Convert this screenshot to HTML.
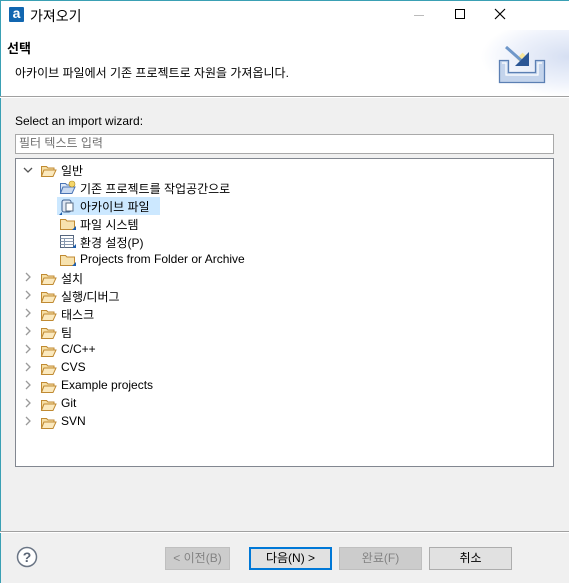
<!DOCTYPE html>
<html><head><meta charset="utf-8"><style>
*{margin:0;padding:0;box-sizing:border-box}
body{width:569px;height:583px;overflow:hidden;background:#f0f0f0;font-family:"Liberation Sans","Noto Sans CJK KR",sans-serif;font-size:12px;color:#000;position:relative}
.a{position:absolute;white-space:nowrap}
.btn{position:absolute;top:547px;height:23px;border:1px solid #adadad;background:#e1e1e1;text-align:center;line-height:21px;font-size:12px}
.dis{background:#cccccc;border-color:#bfbfbf;color:#838383}
</style></head><body>
<div class="a" style="left:0;top:0;width:569px;height:97px;background:#fff"></div>
<div class="a" style="left:0;top:0;width:569px;height:1px;background:#3aa0b4"></div>
<div class="a" style="left:0;top:0;width:1px;height:583px;background:#3aa0b4"></div>
<!-- title -->
<div class="a" style="left:9px;top:7px;width:15px;height:15px;background:#1166b0;border-radius:1px;color:#fff;font-weight:bold;font-size:14px;line-height:13px;text-align:center">a</div>
<div class="a" style="left:30px;top:6px;font-size:14px">가져오기</div>
<div class="a" style="left:414px;top:15px;width:10px;height:1px;background:#bbb"></div>
<div class="a" style="left:455px;top:9px;width:10px;height:10px;border:1px solid #000"></div>
<svg class="a" style="left:494px;top:8px" width="12" height="12"><path d="M1 1L11 11M11 1L1 11" stroke="#000" stroke-width="1.2"/></svg>
<!-- header -->
<div class="a" style="left:480px;top:30px;width:89px;height:67px;background:radial-gradient(ellipse at 100% 40%,#d6dff2 0%,#eef2fb 45%,#fff 70%)"></div>
<div class="a" style="left:7px;top:38px;font-weight:bold;font-size:13px">선택</div>
<div class="a" style="left:15px;top:64px">아카이브 파일에서 기존 프로젝트로 자원을 가져옵니다.</div>
<svg class="a" style="left:498px;top:46px" width="52" height="40">
<path d="M1.5 14.5h9v12h27v-12h9v22h-45z" fill="#c4d4ec" stroke="#5b7fb3" stroke-width="1.3"/>
<path d="M4 17h4v12h32v-12h4" stroke="#fff" fill="none" stroke-width="1.2"/>
<path d="M20 14l6-6" stroke="#f8e69a" stroke-width="4"/>
<path d="M8 1l17 15" stroke="#6f97c9" stroke-width="3"/>
<path d="M17 20l14 0 0-14z" fill="#2b5695"/>
</svg>
<div class="a" style="left:0;top:96px;width:569px;height:1px;background:#a0a0a0"></div>
<div class="a" style="left:0;top:97px;width:569px;height:1px;background:#fff"></div>
<!-- body -->
<div class="a" style="left:15px;top:114px">Select an import wizard:</div>
<div class="a" style="left:15px;top:134px;width:539px;height:20px;background:#fff;border:1px solid #a9a9a9;color:#6d6d6d;padding-left:3px;line-height:17px">필터 텍스트 입력</div>
<div class="a" style="left:15px;top:158px;width:539px;height:309px;background:#fff;border:1px solid #828790"></div>
<div class="a" style="left:57px;top:197px;width:103px;height:18px;background:#cce8ff"></div>
<svg class="a" style="left:0;top:0" width="569" height="470">
<defs>
<g id="of"><path d="M0.5 2.5h5l1.5 1.5h6v2H3L0.5 12z" fill="#f6dfa5" stroke="#c08a32"/><path d="M3 6h12l-3 6.5H0.5z" fill="#fbe9be" stroke="#c08a32"/></g>
<g id="cf"><path d="M0.5 2.5h5l1.5 1.5h7.5v8.5H0.5z" fill="#f7e2ae" stroke="#c08a32"/><path d="M12 13l4-4v4z" fill="#1e5fae"/></g>
</defs>
<path d="M24 168l4 4 4-4" stroke="#555" fill="none" stroke-width="1.3"/>
<use href="#of" x="41" y="164"/>
<g transform="translate(60,181)"><path d="M0.5 2.5h5l1.5 1.5h6v2H3L0.5 12z" fill="#dce8f8" stroke="#4b75b5"/><path d="M3 6h12l-3 6.5H0.5z" fill="#c9daf2" stroke="#4b75b5"/><circle cx="12" cy="3" r="3" fill="#f5d66a" stroke="#b08a20" stroke-width=".6"/></g>
<g transform="translate(60,199)"><rect x="2" y="1" width="9" height="12" rx="2" fill="#dfe7f3" stroke="#3c5f8f"/><rect x="6" y="4" width="7" height="8" fill="#fff" stroke="#5a6d85"/><path d="M-1 16l3-3v3z" fill="#1e5fae"/></g>
<use href="#cf" x="60" y="217"/>
<g transform="translate(60,235)"><rect x="0.5" y="0.5" width="13" height="12" fill="#fff" stroke="#56667e"/><path d="M0.5 3.5h13M0.5 6.5h13M0.5 9.5h13M4.5 3.5v9" stroke="#8a9ab0"/><path d="M12 13l4-4v4z" fill="#1e5fae"/></g>
<use href="#cf" x="60" y="253"/>
<g fill="none" stroke="#9a9a9a" stroke-width="1.3">
<path d="M26 273l4 4-4 4"/><path d="M26 291l4 4-4 4"/><path d="M26 309l4 4-4 4"/><path d="M26 327l4 4-4 4"/><path d="M26 345l4 4-4 4"/><path d="M26 363l4 4-4 4"/><path d="M26 381l4 4-4 4"/><path d="M26 399l4 4-4 4"/><path d="M26 417l4 4-4 4"/></g>
<use href="#of" x="41" y="272"/><use href="#of" x="41" y="290"/><use href="#of" x="41" y="308"/><use href="#of" x="41" y="326"/><use href="#of" x="41" y="344"/><use href="#of" x="41" y="362"/><use href="#of" x="41" y="380"/><use href="#of" x="41" y="398"/><use href="#of" x="41" y="416"/>
</svg>
<div class="a" style="left:61px;top:162px">일반</div>
<div class="a" style="left:80px;top:180px">기존 프로젝트를 작업공간으로</div>
<div class="a" style="left:80px;top:198px">아카이브 파일</div>
<div class="a" style="left:80px;top:216px">파일 시스템</div>
<div class="a" style="left:80px;top:234px">환경 설정(P)</div>
<div class="a" style="left:80px;top:252px">Projects from Folder or Archive</div>
<div class="a" style="left:61px;top:270px">설치</div>
<div class="a" style="left:61px;top:288px">실행/디버그</div>
<div class="a" style="left:61px;top:306px">태스크</div>
<div class="a" style="left:61px;top:324px">팀</div>
<div class="a" style="left:61px;top:342px">C/C++</div>
<div class="a" style="left:61px;top:360px">CVS</div>
<div class="a" style="left:61px;top:378px">Example projects</div>
<div class="a" style="left:61px;top:396px">Git</div>
<div class="a" style="left:61px;top:414px">SVN</div>
<!-- footer -->
<div class="a" style="left:0;top:531px;width:569px;height:1px;background:#a0a0a0"></div>
<div class="a" style="left:0;top:532px;width:569px;height:1px;background:#fff"></div>
<svg class="a" style="left:16px;top:546px" width="22" height="22"><circle cx="11" cy="11" r="9.5" fill="#fff" stroke="#6a7585" stroke-width="1.5"/><text x="11" y="16" text-anchor="middle" font-family="Liberation Sans" font-weight="bold" font-size="14" fill="#5a6575">?</text></svg>
<div class="btn dis" style="left:165px;width:65px">&lt; 이전(B)</div>
<div class="btn" style="left:249px;width:83px;border:2px solid #0078d7;line-height:19px">다음(N) &gt;</div>
<div class="btn dis" style="left:339px;width:83px">완료(F)</div>
<div class="btn" style="left:429px;width:83px">취소</div>
</body></html>
